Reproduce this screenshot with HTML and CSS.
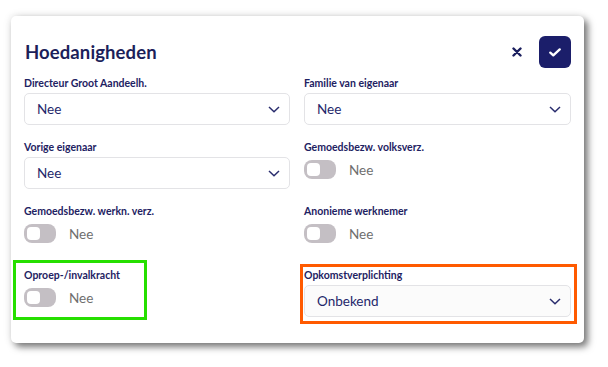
FILE: index.html
```html
<!DOCTYPE html>
<html lang="nl">
<head>
<meta charset="utf-8">
<title>Hoedanigheden</title>
<link rel="stylesheet" href="styles.css">
</head>
<body>
<div class="card">
  <div class="header">
    <h1 class="title">Hoedanigheden</h1>
    <div class="actions">
      <button class="btn-close" aria-label="Sluiten">
        <svg width="10" height="10" viewBox="0 0 10 10"><path d="M1.5 1.5 L8.5 8.5 M8.5 1.5 L1.5 8.5" stroke="#1b1f5e" stroke-width="2.4" stroke-linecap="round"/></svg>
      </button>
      <button class="btn-ok" aria-label="Opslaan">
        <svg width="12" height="9" viewBox="0 0 12 9"><path d="M1.3 4.6 L4.3 7.4 L10.7 1.4" fill="none" stroke="#fff" stroke-width="2.3" stroke-linecap="round" stroke-linejoin="round"/></svg>
      </button>
    </div>
  </div>
  <div class="grid">
    <div class="field">
      <div class="label">Directeur Groot Aandeelh.</div>
      <div class="select"><span>Nee</span><svg class="chev" width="12" height="7" viewBox="0 0 12 7"><path d="M1 1 L6 5.8 L11 1" fill="none" stroke="#2a2d6e" stroke-width="1.5"/></svg></div>
    </div>
    <div class="field">
      <div class="label">Familie van eigenaar</div>
      <div class="select"><span>Nee</span><svg class="chev" width="12" height="7" viewBox="0 0 12 7"><path d="M1 1 L6 5.8 L11 1" fill="none" stroke="#2a2d6e" stroke-width="1.5"/></svg></div>
    </div>
    <div class="field">
      <div class="label">Vorige eigenaar</div>
      <div class="select"><span>Nee</span><svg class="chev" width="12" height="7" viewBox="0 0 12 7"><path d="M1 1 L6 5.8 L11 1" fill="none" stroke="#2a2d6e" stroke-width="1.5"/></svg></div>
    </div>
    <div class="field">
      <div class="label">Gemoedsbezw. volksverz.</div>
      <div class="toggle-row"><span class="toggle"><span class="knob"></span></span><span class="toggle-text">Nee</span></div>
    </div>
    <div class="field">
      <div class="label">Gemoedsbezw. werkn. verz.</div>
      <div class="toggle-row"><span class="toggle"><span class="knob"></span></span><span class="toggle-text">Nee</span></div>
    </div>
    <div class="field">
      <div class="label">Anonieme werknemer</div>
      <div class="toggle-row"><span class="toggle"><span class="knob"></span></span><span class="toggle-text">Nee</span></div>
    </div>
    <div class="field">
      <div class="hl hl-green"></div>
      <div class="label">Oproep-/invalkracht</div>
      <div class="toggle-row"><span class="toggle"><span class="knob"></span></span><span class="toggle-text">Nee</span></div>
    </div>
    <div class="field">
      <div class="hl hl-orange"></div>
      <div class="label">Opkomstverplichting</div>
      <div class="select select-soft"><span>Onbekend</span><svg class="chev" width="12" height="7" viewBox="0 0 12 7"><path d="M1 1 L6 5.8 L11 1" fill="none" stroke="#2a2d6e" stroke-width="1.5"/></svg></div>
    </div>
  </div>
</div>
</body>
</html>
```

FILE: styles.css
```css
* { box-sizing: border-box; }
html, body { margin: 0; padding: 0; background: #ffffff; }
body {
  font-family: Lato, "Liberation Sans", sans-serif;
  width: 608px;
  height: 367px;
  overflow: hidden;
  padding: 16px 0 0 11px;
}
.card {
  width: 573px;
  height: 327px;
  background: #ffffff;
  border-radius: 5px;
  padding: 20px 13px 25px 13px;
  box-shadow: 4px 4px 7px rgba(0,0,0,0.5), 0 0 8px rgba(0,0,0,0.12);
}
.header {
  display: flex;
  align-items: center;
  justify-content: space-between;
  height: 32px;
  margin-bottom: 9px;
}
.title {
  margin: 0 0 0 1px;
  font-size: 18.5px;
  font-weight: 700;
  color: #1c1f5a;
  line-height: 24px;
  letter-spacing: 0.1px;
}
.actions {
  display: flex;
  align-items: center;
  gap: 12px;
}
.btn-close {
  width: 20px;
  height: 20px;
  border: 0;
  background: transparent;
  padding: 0;
  display: flex;
  align-items: center;
  justify-content: center;
}
.btn-ok {
  width: 32px;
  height: 32px;
  border: 0;
  border-radius: 6px;
  background: #1b1e6a;
  padding: 0;
  display: flex;
  align-items: center;
  justify-content: center;
}
.grid {
  display: grid;
  grid-template-columns: 266px 267px;
  column-gap: 14px;
  row-gap: 16px;
}
.field {
  position: relative;
  height: 48px;
}
.label {
  font-size: 10.5px;
  font-weight: 700;
  color: #1e2262;
  line-height: 13px;
  height: 13px;
  margin-bottom: 3px;
  letter-spacing: 0;
  white-space: nowrap;
}
.select {
  height: 32px;
  border: 1px solid #e3e3e6;
  border-radius: 5px;
  background: #ffffff;
  display: flex;
  align-items: center;
  justify-content: space-between;
  padding: 0 9px 0 12px;
  font-size: 13.5px;
  color: #24276a;
}
.select-soft { background: #fbfbfb; }
.chev { display: block; }
.toggle-row {
  display: flex;
  align-items: center;
  gap: 13px;
  margin-top: 6px;
  height: 19px;
}
.toggle {
  width: 32px;
  height: 19px;
  border-radius: 8px;
  background: #c4bfc4;
  display: flex;
  align-items: center;
  padding-left: 3px;
}
.knob {
  width: 13px;
  height: 13px;
  border-radius: 4px;
  background: #ffffff;
}
.toggle-text {
  font-size: 13.5px;
  color: #6e6e6e;
}
.hl {
  position: absolute;
  border: 3px solid;
  pointer-events: none;
}
.hl-green {
  border-color: #26df00;
  left: -11px;
  top: -9px;
  width: 134px;
  height: 60px;
}
.hl-orange {
  border-color: #ff5a00;
  left: -4px;
  top: -5px;
  width: 277px;
  height: 60px;
}
```
